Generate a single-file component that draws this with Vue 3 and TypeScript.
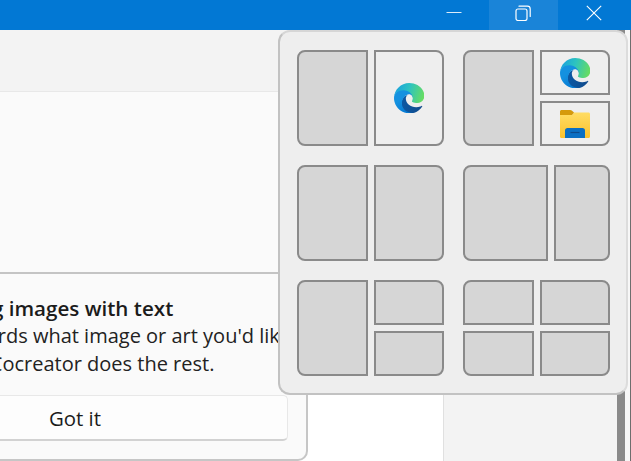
<script setup lang="ts">
const heading = 'Begin creating images with text'
</script>

<template>
  <div class="window">
    <header class="titlebar">
      <button class="ctl">
        <svg width="16" height="16" viewBox="0 0 16 16"><path d="M0.5 7.5H15.5" stroke="#dcecf9" stroke-width="1" fill="none" /></svg>
      </button>
      <button class="ctl ctl-hover">
        <svg width="16" height="16" viewBox="0 0 16 16" fill="none" stroke="#fff" stroke-width="1.2">
          <rect x="1" y="4" width="11" height="11.5" rx="2" />
          <path d="M4 1.2H12.5C14.2 1.2 15.2 2.2 15.2 4V11.5" stroke-linecap="round" />
        </svg>
      </button>
      <button class="ctl ctl-close">
        <svg width="16" height="16" viewBox="0 0 16 16"><path d="M0.8 0.8L15.2 15.2M15.2 0.8L0.8 15.2" stroke="#fff" stroke-width="1.1" fill="none" /></svg>
      </button>
    </header>

    <div class="body">
      <main class="main">
        <div class="toolbar"></div>
        <section class="card">
          <div class="preview"></div>
          <div class="copy">
            <h2>{{ heading }}</h2>
            <p>Describe in words what image or art you'd like<br />to create and Cocreator does the rest.</p>
          </div>
          <button class="got">Got it</button>
        </section>
      </main>
      <aside class="side"></aside>
      <div class="scroll"></div>
      <div class="edge"></div>
    </div>

    <div class="flyout">
      <div class="grp halves">
        <div class="tile tl"></div>
        <div class="tile tr clear">
          <svg class="ico" width="30" height="30" viewBox="0 0 256 256">
            <defs>
              <linearGradient id="eA" x1="63" y1="205" x2="241" y2="205" gradientUnits="userSpaceOnUse"><stop offset="0" stop-color="#0c59a4" /><stop offset="1" stop-color="#114a8b" /></linearGradient>
              <linearGradient id="eB" x1="95" y1="100" x2="205" y2="220" gradientUnits="userSpaceOnUse"><stop offset="0" stop-color="#1491e0" /><stop offset=".5" stop-color="#0a80d6" /><stop offset="1" stop-color="#0074d0" /></linearGradient>
              <linearGradient id="eC" x1="20" y1="40" x2="250" y2="110" gradientUnits="userSpaceOnUse"><stop offset="0" stop-color="#1aa4dc" /><stop offset=".45" stop-color="#2dc3c0" /><stop offset="1" stop-color="#66dc63" /></linearGradient>
            </defs>
            <path fill="url(#eA)" d="M235.7 195.5c-3.4 1.8-6.9 3.4-10.5 4.7-11.5 4.3-23.6 6.5-35.9 6.5-47.3 0-88.5-32.5-88.5-74.3.1-11.4 6.4-21.9 16.4-27.3-42.8 1.8-53.8 46.4-53.8 72.5 0 73.9 68.1 81.4 82.8 81.4 7.9 0 19.8-2.3 27-4.6l1.3-.4c27.6-9.5 51-28.1 66.6-52.8 1.2-1.9.6-4.3-1.2-5.5-1.3-.8-2.9-.9-4.2-.2z" />
            <path fill="url(#eB)" d="M105.7 241.4c-8.9-5.5-16.6-12.8-22.7-21.3-26.3-36-18.4-86.5 17.6-112.8 3.8-2.7 7.7-5.2 11.9-7.2 3.1-1.5 8.4-4.1 15.5-4 10.1.1 19.6 4.9 25.7 13 4 5.4 6.3 11.9 6.4 18.7 0-.2 24.5-79.6-80-79.6-43.9 0-80 41.7-80 78.2-.2 19.3 4 38.5 12.1 56 27.6 58.8 94.8 87.6 156.4 67.1-21.1 6.6-44.1 3.7-62.9-8.1z" />
            <path fill="url(#eC)" d="M156.3 149c-.8 1-3.3 2.5-3.3 5.7 0 2.6 1.7 5.2 4.8 7.3 14.3 10 41.4 8.6 41.5 8.6 10.7 0 21.1-2.9 30.2-8.3 18.5-10.8 29.9-30.6 29.9-52 .3-22.4-8-37.3-11.3-43.9C227 25.4 180.5 0 130 0 58.9 0 1 57.1 0 128.2c.5-36.5 36.8-66 80-66 3.5 0 23.5.3 42 10.1 16.3 8.6 24.9 18.9 30.8 29.2 6.2 10.7 7.3 24.1 7.3 29.5 0 5.3-2.7 13.3-3.8 17.9z" />
          </svg>
        </div>
      </div>

      <div class="grp halves">
        <div class="tile tl"></div>
        <div class="stack">
          <div class="tile tr-only clear">
            <svg class="ico" width="30" height="30" viewBox="0 0 256 256">
              <path fill="url(#eA)" d="M235.7 195.5c-3.4 1.8-6.9 3.4-10.5 4.7-11.5 4.3-23.6 6.5-35.9 6.5-47.3 0-88.5-32.5-88.5-74.3.1-11.4 6.4-21.9 16.4-27.3-42.8 1.8-53.8 46.4-53.8 72.5 0 73.9 68.1 81.4 82.8 81.4 7.9 0 19.8-2.3 27-4.6l1.3-.4c27.6-9.5 51-28.1 66.6-52.8 1.2-1.9.6-4.3-1.2-5.5-1.3-.8-2.9-.9-4.2-.2z" />
              <path fill="url(#eB)" d="M105.7 241.4c-8.9-5.5-16.6-12.8-22.7-21.3-26.3-36-18.4-86.5 17.6-112.8 3.8-2.7 7.7-5.2 11.9-7.2 3.1-1.5 8.4-4.1 15.5-4 10.1.1 19.6 4.9 25.7 13 4 5.4 6.3 11.9 6.4 18.7 0-.2 24.5-79.6-80-79.6-43.9 0-80 41.7-80 78.2-.2 19.3 4 38.5 12.1 56 27.6 58.8 94.8 87.6 156.4 67.1-21.1 6.6-44.1 3.7-62.9-8.1z" />
              <path fill="url(#eC)" d="M156.3 149c-.8 1-3.3 2.5-3.3 5.7 0 2.6 1.7 5.2 4.8 7.3 14.3 10 41.4 8.6 41.5 8.6 10.7 0 21.1-2.9 30.2-8.3 18.5-10.8 29.9-30.6 29.9-52 .3-22.4-8-37.3-11.3-43.9C227 25.4 180.5 0 130 0 58.9 0 1 57.1 0 128.2c.5-36.5 36.8-66 80-66 3.5 0 23.5.3 42 10.1 16.3 8.6 24.9 18.9 30.8 29.2 6.2 10.7 7.3 24.1 7.3 29.5 0 5.3-2.7 13.3-3.8 17.9z" />
            </svg>
          </div>
          <div class="tile br-only clear">
            <svg class="ico" width="30" height="28" viewBox="0 0 30 28">
              <defs>
                <linearGradient id="fB" x1="0" y1="3" x2="0" y2="28" gradientUnits="userSpaceOnUse"><stop offset="0" stop-color="#ffdc63" /><stop offset="1" stop-color="#fcc22e" /></linearGradient>
              </defs>
              <path fill="url(#fB)" d="M0 5H12L14 2.5H28.5C29.4 2.5 30 3.2 30 4V26.5C30 27.4 29.4 28 28.5 28H1.5C.6 28 0 27.4 0 26.5z" />
              <path fill="#d59a0c" d="M0 1.5C0 .7.7 0 1.5 0H10C11 0 11.6.4 12.3 1L14 2.5L12 5H0z" />
              <path fill="#0a6fc4" d="M5 20.5C5 19 6 18 7.5 18H22.5C24 18 25 19 25 20.5V28H5z" />
              <path stroke="#0c4a8c" stroke-width="1.2" d="M10.5 22.5H19.5" fill="none" />
            </svg>
          </div>
        </div>
      </div>

      <div class="grp halves">
        <div class="tile tl"></div>
        <div class="tile tr"></div>
      </div>

      <div class="grp wide">
        <div class="tile tl"></div>
        <div class="tile tr"></div>
      </div>

      <div class="grp halves">
        <div class="tile tl"></div>
        <div class="stack">
          <div class="tile tr-only"></div>
          <div class="tile br-only"></div>
        </div>
      </div>

      <div class="grp quad">
        <div class="tile tl-only"></div>
        <div class="tile tr-only"></div>
        <div class="tile bl-only"></div>
        <div class="tile br-only"></div>
      </div>
    </div>
  </div>
</template>

<style>
html,
body {
  margin: 0;
  overflow: hidden;
}
</style>

<style scoped>
.window {
  position: relative;
  width: 631px;
  height: 461px;
  overflow: hidden;
  display: flex;
  flex-direction: column;
  font-family: "Open Sans", "Noto Sans", sans-serif;
  color: #1b1b1b;
}
.titlebar {
  height: 30px;
  flex: none;
  background: #0278d4;
  display: flex;
  justify-content: flex-end;
}
.ctl {
  width: 69px;
  height: 30px;
  padding: 5px 2px 0 0;
  border: 0;
  background: transparent;
  display: flex;
  justify-content: center;
  align-items: flex-start;
}
.ctl-hover {
  background: #1a84d8;
}
.ctl-close {
  width: 73px;
}
.ctl svg {
  display: block;
}
.body {
  flex: 1;
  display: flex;
  min-height: 0;
}
.main {
  width: 443px;
  flex: none;
  background: #fff;
  display: flex;
  flex-direction: column;
}
.toolbar {
  height: 61px;
  flex: none;
  background: #f3f3f3;
}
.card {
  margin-left: -158px;
  width: 466px;
  height: 370px;
  box-sizing: border-box;
  background: #fafafa;
  border-top: 1px solid #e8e8e8;
  border-right: 2px solid #c6c6c6;
  border-bottom: 2px solid #c6c6c6;
  border-radius: 0 0 10px 0;
  display: flex;
  flex-direction: column;
}
.preview {
  height: 180px;
  flex: none;
  border-bottom: 2px solid #c4c4c4;
}
.copy {
  padding: 20px 0 0 19px;
  white-space: nowrap;
}
.copy h2 {
  margin: 0;
  font-size: 20.6px;
  line-height: 28px;
  font-weight: 600;
  color: #1b1b1b;
}
.copy p {
  margin: 0;
  font-size: 20px;
  line-height: 28px;
  color: #222;
}
.got {
  margin: 17px 18px 0 20px;
  height: 46px;
  box-sizing: border-box;
  background: #fdfdfd;
  border: 1px solid #e8e8e8;
  border-bottom: 2px solid #d2d2d2;
  border-radius: 5px;
  font: inherit;
  font-size: 20.4px;
  color: #1b1b1b;
}
.side {
  width: 174px;
  flex: none;
  background: #f3f3f3;
  border-left: 1px solid #e0e0e0;
  box-sizing: border-box;
}
.scroll {
  width: 8px;
  flex: none;
  background: #8a8a8a;
}
.edge {
  flex: 1;
  background: #f7f7f7;
  border-right: 1px solid #6e6e6e;
}
.flyout {
  position: absolute;
  left: 278px;
  top: 30px;
  width: 350px;
  height: 365px;
  box-sizing: border-box;
  padding: 18px 16px 0 17px;
  background: #eeeeee;
  border: 2px solid #c2c2c2;
  border-top-color: #d6d6d6;
  border-right-color: #dcdcdc;
  border-radius: 12px;
  display: grid;
  grid-template-columns: 147px 147px;
  grid-template-rows: 96px 96px 96px;
  column-gap: 19px;
  row-gap: 19px;
  align-content: start;
}
.grp {
  display: grid;
  gap: 6px;
  min-width: 0;
}
.halves {
  grid-template-columns: 71px 70px;
}
.wide {
  grid-template-columns: 85px 56px;
}
.quad {
  grid-template-columns: 71px 70px;
  grid-template-rows: 45px 45px;
}
.stack {
  display: grid;
  grid-template-rows: 45px 45px;
  gap: 6px;
}
.tile {
  box-sizing: border-box;
  background: #d6d6d6;
  border: 2px solid #8a8a8a;
  display: flex;
  align-items: center;
  justify-content: center;
}
.clear {
  background: #eeeeee;
}
.ico {
  display: block;
}
.tl {
  border-radius: 8px 0 0 8px;
}
.tr {
  border-radius: 0 8px 8px 0;
}
.tl-only {
  border-radius: 8px 0 0 0;
}
.tr-only {
  border-radius: 0 8px 0 0;
}
.bl-only {
  border-radius: 0 0 0 8px;
}
.br-only {
  border-radius: 0 0 8px 0;
}
</style>
